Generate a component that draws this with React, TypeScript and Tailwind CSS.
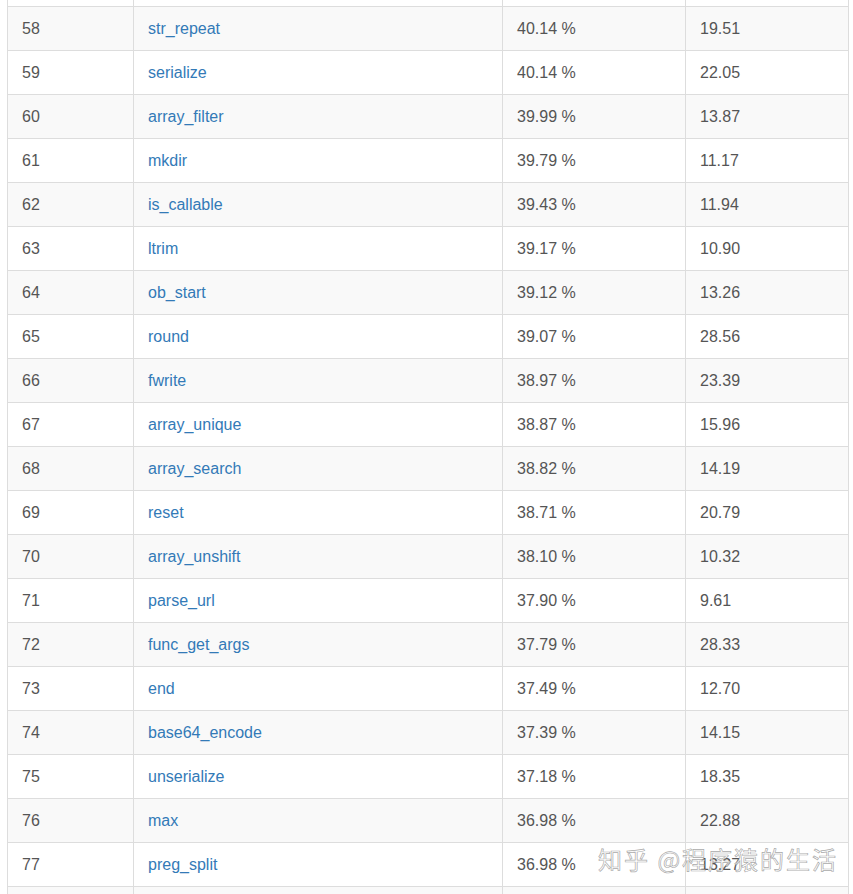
import React from "react";

const rows: [number, string, string, string][] = [
  [57, "", "", ""],
  [58, "str_repeat", "40.14 %", "19.51"],
  [59, "serialize", "40.14 %", "22.05"],
  [60, "array_filter", "39.99 %", "13.87"],
  [61, "mkdir", "39.79 %", "11.17"],
  [62, "is_callable", "39.43 %", "11.94"],
  [63, "ltrim", "39.17 %", "10.90"],
  [64, "ob_start", "39.12 %", "13.26"],
  [65, "round", "39.07 %", "28.56"],
  [66, "fwrite", "38.97 %", "23.39"],
  [67, "array_unique", "38.87 %", "15.96"],
  [68, "array_search", "38.82 %", "14.19"],
  [69, "reset", "38.71 %", "20.79"],
  [70, "array_unshift", "38.10 %", "10.32"],
  [71, "parse_url", "37.90 %", "9.61"],
  [72, "func_get_args", "37.79 %", "28.33"],
  [73, "end", "37.49 %", "12.70"],
  [74, "base64_encode", "37.39 %", "14.15"],
  [75, "unserialize", "37.18 %", "18.35"],
  [76, "max", "36.98 %", "22.88"],
  [77, "preg_split", "36.98 %", "13.27"],
  [78, "", "", ""],
];

export default function App() {
  return (
    <div
      className="relative w-[853px] h-[894px] overflow-hidden bg-white"
      style={{ fontFamily: '"Liberation Sans", Arial, sans-serif' }}
    >
      <div className="ml-[7px] mt-[-37px] w-[842px] text-[16px] leading-[20px]">
        {rows.map(([n, name, pct, val]) => {
          const bg = n % 2 === 0 ? "bg-[#f9f9f9]" : "bg-white";
          return (
            <div key={n} className={`flex h-[44px] border-b border-[#dddddd] ${bg}`}>
              <div className="w-[126px] shrink-0 border-l border-[#dddddd] pl-[14px] flex items-center text-[#555555]">
                {name ? n : ""}
              </div>
              <div className="w-[369px] shrink-0 border-l border-[#dddddd] pl-[14px] flex items-center text-[#337ab7]">
                {name}
              </div>
              <div className="w-[183px] shrink-0 border-l border-[#dddddd] pl-[14px] flex items-center text-[#555555]">
                {pct}
              </div>
              <div className="w-[164px] shrink-0 border-l border-r border-[#dddddd] pl-[14px] flex items-center text-[#555555]">
                {val}
              </div>
            </div>
          );
        })}
      </div>
      <div
        className="absolute left-[598px] top-[842px] text-[24px] leading-[34px] tracking-[2px] text-white/70"
        style={{
          fontFamily: '"Noto Sans CJK SC", "Liberation Sans", sans-serif',
          WebkitTextStroke: "0.7px rgba(140,140,140,0.75)",
        }}
      >
        知乎 @程序猿的生活
      </div>
    </div>
  );
}
